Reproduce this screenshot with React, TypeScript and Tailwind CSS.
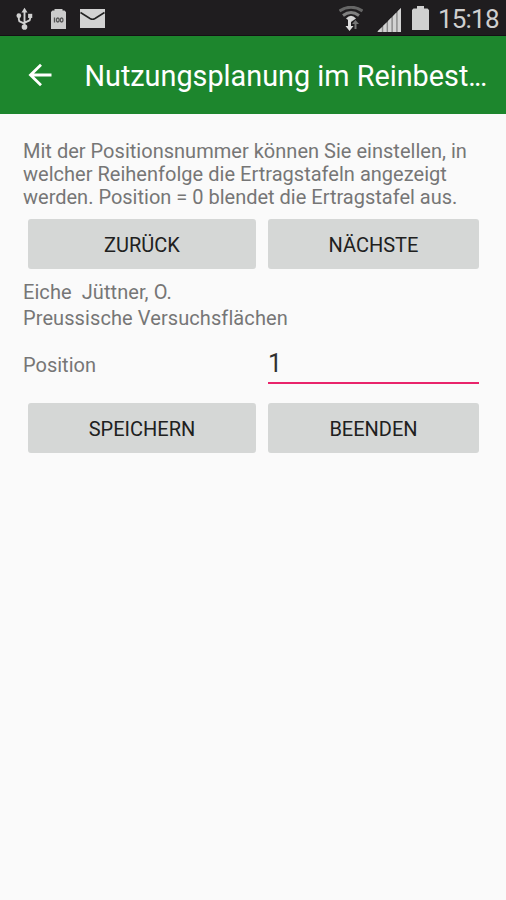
import React from 'react';

interface ActionButtonProps {
  label: string;
  className?: string;
}

const ActionButton: React.FC<ActionButtonProps> = ({ label, className = '' }) => (
  <button
    type="button"
    className={`h-[50px] rounded-[3px] bg-[#d5d7d6] pt-px text-[20px] leading-none text-[#202020] ${className}`}
  >
    {label}
  </button>
);

const UsbIcon = () => (
  <svg width="17" height="24" viewBox="0 0 18 24" fill="none" stroke="#d0d0d0" strokeWidth="2">
    <path d="M9 4v16M3 10v2.5q0 2 2 2.6l4 1.9M15 9v2.5q0 2-2 2.6L9 16" />
    <path d="M9 0l3.2 5H5.800z" fill="#d0d0d0" stroke="none" />
    <circle cx="3" cy="8.5" r="2.5" fill="#d0d0d0" stroke="none" />
    <path d="M12.800 6.500h4.400v4.400h-4.400z" fill="#d0d0d0" stroke="none" />
    <circle cx="9" cy="20.5" r="3" fill="#d0d0d0" stroke="none" />
  </svg>
);

const BatteryFullIcon = () => (
  <svg width="15" height="20" viewBox="0 0 15 20">
    <path d="M3.500 0h8v1.500h2L15 3v17H0V3l1.500-1.500h2z" fill="#cbcbcb" />
    <g fill="none" stroke="#555" strokeWidth="1.300">
      <path d="M3.500 8.500v5" />
      <ellipse cx="6.800" cy="11" rx="1.400" ry="2" />
      <ellipse cx="10.600" cy="11" rx="1.400" ry="2" />
    </g>
  </svg>
);

const MailIcon = () => (
  <svg width="25" height="19" viewBox="0 0 25 19">
    <path d="M0 0h25v19H0z" fill="#d2d2d2" />
    <path d="M0.500 3.500l9.500 6q2.500 1.500 5 0l9.500-6" fill="none" stroke="#222" strokeWidth="1.500" />
  </svg>
);

const WifiIcon = () => (
  <svg width="24" height="26" viewBox="0 0 24 26" fill="none">
    <path d="M0.500 5Q12-2.500 23.500 5" stroke="#666" strokeWidth="3" />
    <path d="M4 9.500q8-6 16 0" stroke="#808080" strokeWidth="3" />
    <path d="M7 12.500Q12 7 17 12.500L12 16z" fill="#d4d4d4" />
    <path d="M9 14v6H6.500l4 5 4-5H12v-6z" fill="#dedede" />
    <path d="M15.500 23v-5H13l3.500-4 3.500 4h-2.500v5z" fill="#777" />
  </svg>
);

const SignalIcon = () => (
  <svg width="24" height="24" viewBox="0 0 25 25">
    <path d="M0 25L25 0v25z" fill="#8a8a8a" />
    <path d="M1 25v-1l4-4v5zM6.500 25v-6.500l3.500-3.500v10zM11.500 25V13.500l3.500-3.500v15zM16.500 25V8.500L20 5v20zM21.500 25V3.500L25 0v25z" fill="#d3d3d3" />
  </svg>
);

const BatteryIcon = () => (
  <svg width="17" height="24" viewBox="0 0 17 24">
    <path d="M5 0h7v2.500h3.500L17 4v20H0V4l1.500-1.500H5z" fill="#d0d0d0" />
  </svg>
);

const StatusBar = () => (
  <div className="flex h-9 items-start justify-between border-b border-[#151015] bg-[#1f1d1f] pl-4 pr-[7px]">
    <div className="flex">
      <div className="mt-[7px]"><UsbIcon /></div>
      <div className="ml-[18px] mt-[9px]"><BatteryFullIcon /></div>
      <div className="ml-[14px] mt-[9px]"><MailIcon /></div>
    </div>
    <div className="flex">
      <div className="mt-[6px]"><WifiIcon /></div>
      <div className="ml-[14px] mt-[8px]"><SignalIcon /></div>
      <div className="ml-[11px] mt-[6px]"><BatteryIcon /></div>
      <span className="ml-[9px] mt-[4px] w-[61px] whitespace-nowrap text-[26px] leading-[30px] tracking-[-0.800px] text-[#cfcfcf]">15:18</span>
    </div>
  </div>
);

const AppBar = () => (
  <header className="flex h-[78px] items-center bg-[#1d862d] text-white">
    <svg className="ml-7" width="24" height="24" viewBox="0 0 24 24" fill="none" stroke="white" strokeWidth="2.800">
      <path d="M23.500 12H2.500M13 1.800L2.500 12 13 22.200" />
    </svg>
    <h1 className="ml-[32.500px] whitespace-nowrap pt-[4px] text-[28.800px]">
      Nutzungsplanung im Reinbest<span className="tracking-[-1.800px]">...</span>
    </h1>
  </header>
);

export default function App() {
  return (
    <div className="h-[900px] w-[506px] overflow-hidden bg-[#fafafa] font-['Roboto',sans-serif]">
      <StatusBar />
      <AppBar />
      <main className="pl-[23px] pr-[27px] pt-[26px] text-[20px] text-[#767676]">
        <div className="whitespace-nowrap leading-[23px]">
          <p className="tracking-[0.020px]">Mit der Positionsnummer können Sie einstellen, in</p>
          <p className="tracking-[0.020px]">welcher Reihenfolge die Ertragstafeln angezeigt</p>
          <p>werden. Position = 0 blendet die Ertragstafel aus.</p>
        </div>
        <div className="mt-[10px] flex gap-3 pl-[5px]">
          <ActionButton label="ZURÜCK" className="w-[228px]" />
          <ActionButton label="NÄCHSTE" className="flex-1" />
        </div>
        <div className="mt-[10px] leading-[26px]">
          <p className="whitespace-pre tracking-[0.070px]">{'Eiche  Jüttner, O.'}</p>
          <p className="tracking-[0.090px]">Preussische Versuchsflächen</p>
        </div>
        <div className="mt-[13px] flex h-[40px] items-end">
          <label htmlFor="position" className="w-[245px] pb-[4px]">Position</label>
          <input
            id="position"
            defaultValue="1"
            className="h-[40px] min-w-0 flex-1 border-b-2 border-[#e9246b] bg-transparent text-[25px] text-[#303030] outline-none"
          />
        </div>
        <div className="mt-[19px] flex gap-3 pl-[5px]">
          <ActionButton label="SPEICHERN" className="w-[228px]" />
          <ActionButton label="BEENDEN" className="flex-1" />
        </div>
      </main>
    </div>
  );
}
